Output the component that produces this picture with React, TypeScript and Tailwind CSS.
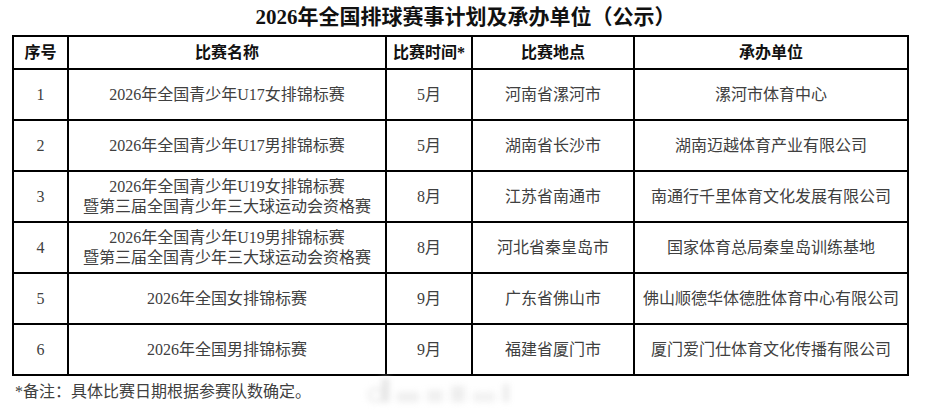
const FONT = 'font-["Liberation_Serif","Noto_Sans_CJK_SC",serif]';

const rows: { no: string; name: string[]; time: string; place: string; host: string }[] = [
  { no: '1', name: ['2026年全国青少年U17女排锦标赛'], time: '5月', place: '河南省漯河市', host: '漯河市体育中心' },
  { no: '2', name: ['2026年全国青少年U17男排锦标赛'], time: '5月', place: '湖南省长沙市', host: '湖南迈越体育产业有限公司' },
  {
    no: '3',
    name: ['2026年全国青少年U19女排锦标赛', '暨第三届全国青少年三大球运动会资格赛'],
    time: '8月',
    place: '江苏省南通市',
    host: '南通行千里体育文化发展有限公司',
  },
  {
    no: '4',
    name: ['2026年全国青少年U19男排锦标赛', '暨第三届全国青少年三大球运动会资格赛'],
    time: '8月',
    place: '河北省秦皇岛市',
    host: '国家体育总局秦皇岛训练基地',
  },
  { no: '5', name: ['2026年全国女排锦标赛'], time: '9月', place: '广东省佛山市', host: '佛山顺德华体德胜体育中心有限公司' },
  { no: '6', name: ['2026年全国男排锦标赛'], time: '9月', place: '福建省厦门市', host: '厦门爱门仕体育文化传播有限公司' },
];

const headers = ['序号', '比赛名称', '比赛时间*', '比赛地点', '承办单位'];

function Cell({ children, head }: { children: React.ReactNode; head?: boolean }) {
  return (
    <div
      className={`bg-white flex flex-col items-center justify-center text-center text-[16px] leading-[20px] ${
        head ? 'h-[31px] font-bold text-[#111]' : 'h-[49px] text-[#404040]'
      }`}
    >
      {children}
    </div>
  );
}

export default function App() {
  return (
    <div className={`relative w-[929px] h-[416px] bg-white overflow-hidden ${FONT}`}>
      <div className="h-[35px] flex items-center justify-center pl-[2px]">
        <h1 className="text-[21px] font-bold text-[#111] leading-none">2026年全国排球赛事计划及承办单位（公示）</h1>
      </div>

      <div className="ml-[12px] w-[897px] grid grid-cols-[53px_316px_84px_160px_272px] gap-[2px] p-[2px] bg-black">
        {headers.map((h) => (
          <Cell key={h} head>
            {h}
          </Cell>
        ))}
        {rows.map((r) => (
          <div key={r.no} className="contents">
            <Cell>{r.no}</Cell>
            <Cell>
              {r.name.map((n) => (
                <span key={n}>{n}</span>
              ))}
            </Cell>
            <Cell>{r.time}</Cell>
            <Cell>{r.place}</Cell>
            <Cell>{r.host}</Cell>
          </div>
        ))}
      </div>

      <p className="ml-[15px] mt-[6px] text-[16px] leading-[20px] text-[#404040]">*备注：具体比赛日期根据参赛队数确定。</p>

      {/* faint watermark */}
      <div className="absolute left-[368px] top-[378px] flex items-end gap-[8px] blur-[3px]">
        <div className="w-[16px] h-[14px] rounded-full border-2 border-[#e2e2e2]" />
        <div className="w-[7px] h-[24px] -ml-[10px] bg-[#e4e4e4]" />
        <div className="w-[22px] h-[10px] bg-[#efefef]" />
        <div className="w-[16px] h-[12px] bg-[#f0f0f0]" />
        <div className="w-[14px] h-[16px] bg-[#eeeeee]" />
        <div className="w-[22px] h-[10px] bg-[#f2f2f2]" />
        <div className="w-[6px] h-[18px] bg-[#ebebeb]" />
      </div>
    </div>
  );
}
